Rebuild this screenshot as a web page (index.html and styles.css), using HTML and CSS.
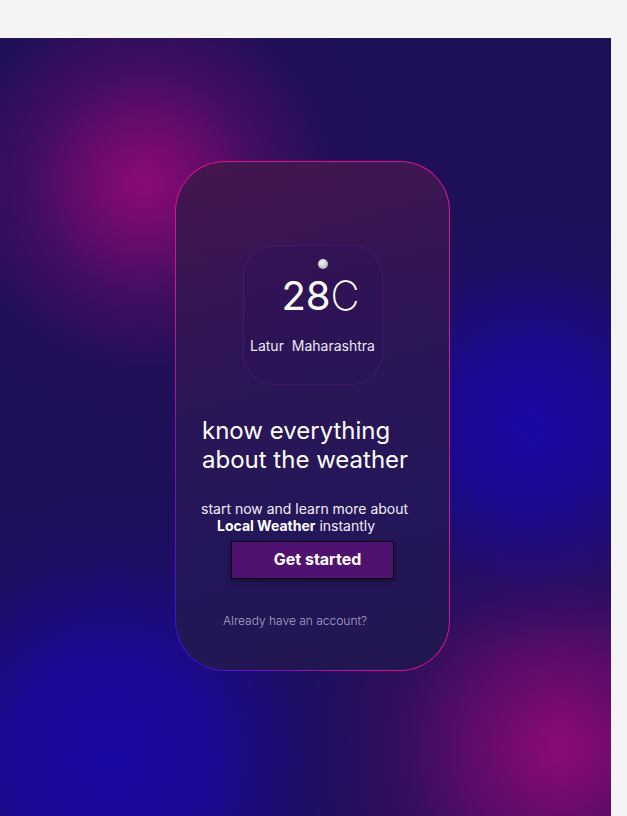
FILE: index.html
```html
<!DOCTYPE html>
<html lang="en">
<head>
<meta charset="utf-8">
<title>Weather</title>
<link rel="stylesheet" href="styles.css">
</head>
<body>
<main class="stage">
  <section class="card">
    <div class="widget">
      <span class="sun"></span>
      <div class="temp">28<span class="unit">C</span></div>
      <div class="place">Latur&nbsp; Maharashtra</div>
    </div>
    <h1 class="title">know everything<br>about the weather</h1>
    <p class="lead">
      <span class="lead-line first">start now and learn more about</span>
      <span class="lead-line second"><strong>Local Weather</strong> instantly</span>
    </p>
    <button class="cta" type="button">Get started</button>
    <p class="account">Already have an account?</p>
  </section>
</main>
</body>
</html>
```

FILE: styles.css
```css
html, body {
  margin: 0;
  padding: 0;
  background: #f4f4f5;
  overflow: hidden;
}

body {
  font-family: "Inter", "Noto Sans", sans-serif;
  color: #ffffff;
}

.stage {
  margin-top: 38px;
  width: 611px;
  height: 778px;
  box-sizing: border-box;
  padding: 123px 0 0 175px;
  background:
    radial-gradient(circle 250px at 145px 145px, #8a0a74 0%, rgba(128, 10, 114, 0.85) 18%, rgba(96, 12, 104, 0.55) 45%, rgba(50, 14, 92, 0.2) 75%, rgba(29, 16, 88, 0) 100%),
    radial-gradient(circle 230px at 530px 390px, #1a08a6 0%, rgba(26, 8, 166, 0.7) 35%, rgba(26, 10, 130, 0.25) 70%, rgba(29, 16, 88, 0) 100%),
    radial-gradient(circle 280px at 110px 720px, #1a08a4 0%, rgba(26, 8, 164, 0.8) 35%, rgba(26, 10, 130, 0.3) 70%, rgba(29, 16, 88, 0) 100%),
    radial-gradient(circle 270px at 560px 710px, #8c0a74 0%, rgba(128, 10, 114, 0.72) 28%, rgba(80, 12, 100, 0.38) 62%, rgba(29, 16, 88, 0) 100%),
    #1d1058;
}

.card {
  width: 275px;
  height: 510px;
  box-sizing: border-box;
  border-radius: 50px;
  border: 1px solid transparent;
  background:
    linear-gradient(165deg, #45164f 0%, #371553 22%, #2a1656 45%, #23165a 70%, #22164f 100%) padding-box,
    linear-gradient(to top right, #2a12e6 0%, #7a10c0 18%, #d8128f 38%, #e6138c 100%) border-box;
  display: flex;
  flex-direction: column;
}

.widget {
  margin: 83px auto 0;
  width: 140px;
  height: 140px;
  box-sizing: border-box;
  border-radius: 32px;
  border: 1px solid rgba(96, 28, 140, 0.45);
  background: rgba(34, 14, 96, 0.15);
  display: flex;
  flex-direction: column;
  align-items: center;
}

.sun {
  display: block;
  margin: 13px 0 0 20px;
  width: 10px;
  height: 10px;
  border-radius: 50%;
  background: radial-gradient(circle at 40% 35%, #f2f2f2 0%, #c8c8c8 55%, #9a9a9a 100%);
}

.temp {
  margin: 7px 0 0 16px;
  font-size: 40px;
  line-height: 40px;
  font-weight: 400;
}

.unit {
  font-weight: 200;
}

.place {
  margin-top: 21px;
  font-size: 14px;
  line-height: 17px;
  color: #ece8f4;
  white-space: nowrap;
}

.title {
  margin: 31px 0 0 26px;
  font-size: 24px;
  line-height: 29px;
  font-weight: 400;
  color: #ffffff;
}

.lead {
  margin: 26px 0 0 0;
  font-size: 14px;
  line-height: 17px;
  color: #f2eff8;
}

.lead-line {
  display: block;
  white-space: nowrap;
}

.lead-line.first {
  padding-left: 25px;
}

.lead-line.second {
  padding-left: 41px;
}

.lead strong {
  font-weight: 700;
  color: #ffffff;
}

.cta {
  margin: 7px 0 0 55px;
  width: 163px;
  height: 38px;
  box-sizing: border-box;
  border: 1px solid #07030c;
  background: #4f1270;
  color: #ffffff;
  font-family: "Inter", "Noto Sans", sans-serif;
  font-size: 16px;
  font-weight: 700;
  padding: 0 0 2px 10px;
  box-shadow: 0 2px 5px rgba(0, 0, 0, 0.45);
  cursor: pointer;
}

.account {
  margin: 34px 0 0 47px;
  font-size: 12px;
  line-height: 15px;
  font-weight: 300;
  color: #aca4c8;
}
```
